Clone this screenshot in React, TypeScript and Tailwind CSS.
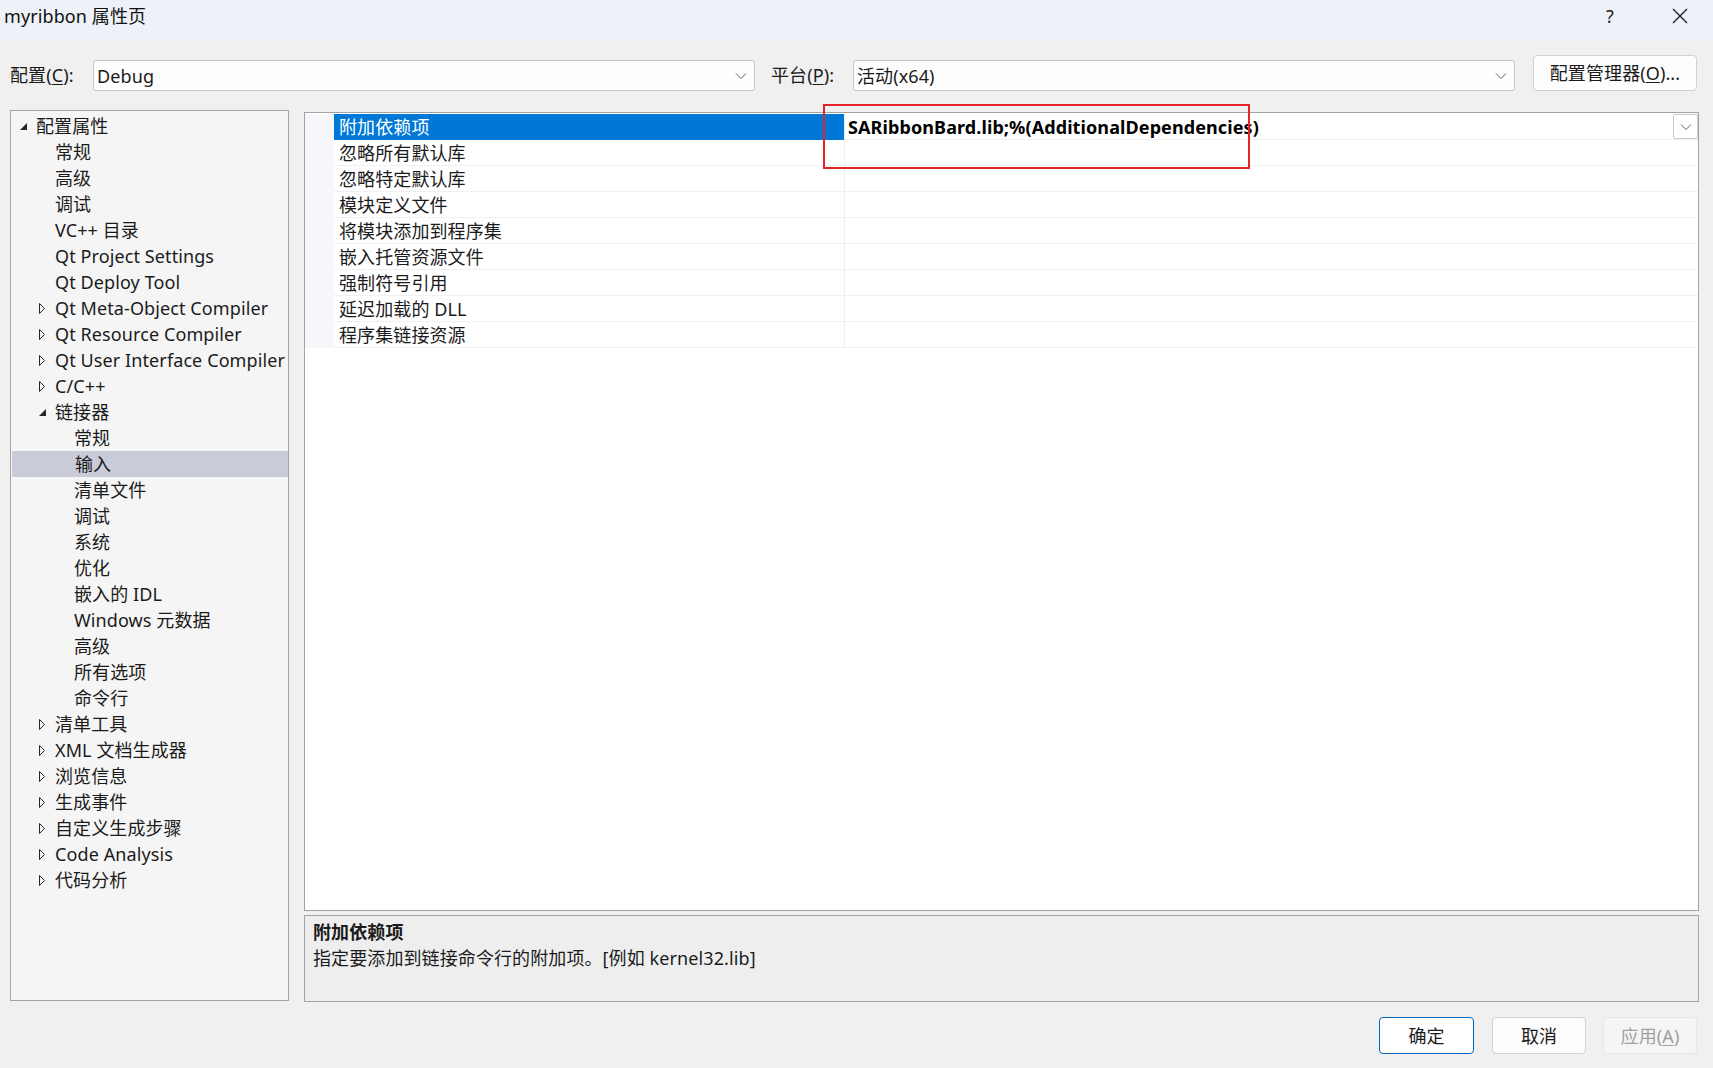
import React from 'react';

type TreeNode = {
  label: string;
  level: number;
  expander?: 'open' | 'closed';
  selected?: boolean;
};

const treeItems: TreeNode[] = [
  { label: '配置属性', level: 0, expander: 'open' },
  { label: '常规', level: 1 },
  { label: '高级', level: 1 },
  { label: '调试', level: 1 },
  { label: 'VC++ 目录', level: 1 },
  { label: 'Qt Project Settings', level: 1 },
  { label: 'Qt Deploy Tool', level: 1 },
  { label: 'Qt Meta-Object Compiler', level: 1, expander: 'closed' },
  { label: 'Qt Resource Compiler', level: 1, expander: 'closed' },
  { label: 'Qt User Interface Compiler', level: 1, expander: 'closed' },
  { label: 'C/C++', level: 1, expander: 'closed' },
  { label: '链接器', level: 1, expander: 'open' },
  { label: '常规', level: 2 },
  { label: '输入', level: 2, selected: true },
  { label: '清单文件', level: 2 },
  { label: '调试', level: 2 },
  { label: '系统', level: 2 },
  { label: '优化', level: 2 },
  { label: '嵌入的 IDL', level: 2 },
  { label: 'Windows 元数据', level: 2 },
  { label: '高级', level: 2 },
  { label: '所有选项', level: 2 },
  { label: '命令行', level: 2 },
  { label: '清单工具', level: 1, expander: 'closed' },
  { label: 'XML 文档生成器', level: 1, expander: 'closed' },
  { label: '浏览信息', level: 1, expander: 'closed' },
  { label: '生成事件', level: 1, expander: 'closed' },
  { label: '自定义生成步骤', level: 1, expander: 'closed' },
  { label: 'Code Analysis', level: 1, expander: 'closed' },
  { label: '代码分析', level: 1, expander: 'closed' },
];

const properties = [
  '附加依赖项',
  '忽略所有默认库',
  '忽略特定默认库',
  '模块定义文件',
  '将模块添加到程序集',
  '嵌入托管资源文件',
  '强制符号引用',
  '延迟加载的 DLL',
  '程序集链接资源',
];

const indent = ['pl-[9px]', 'pl-[28px]', 'pl-[47px]'];

const Chevron = () => (
  <svg width="12" height="8" viewBox="0 0 12 8" fill="none">
    <polyline points="1,1.5 6,6.5 11,1.5" stroke="#606060" strokeWidth="1" />
  </svg>
);

const Expander: React.FC<{ kind?: 'open' | 'closed' }> = ({ kind }) => (
  <span className="w-[16px] h-[26px] flex items-center">
    {kind === 'open' && (
      <svg width="7" height="7" viewBox="0 0 7 7">
        <polygon points="7,0 7,7 0,7" fill="#262626" />
      </svg>
    )}
    {kind === 'closed' && (
      <svg width="6" height="11" viewBox="0 0 6 11">
        <polygon points="0.5,0.5 5.5,5.5 0.5,10.5" fill="none" stroke="#262626" strokeWidth="1" />
      </svg>
    )}
  </span>
);

const ComboBox: React.FC<{ value: string }> = ({ value }) => (
  <div className="w-[662px] h-[31px] mt-[5px] bg-[#fdfdfd] border border-[#c4c4c4] rounded-[3px] flex items-center justify-between pl-[3px] pr-[7px]">
    <span>{value}</span>
    <Chevron />
  </div>
);

export default function App() {
  return (
    <div className="w-[1713px] h-[1068px] bg-[#f0f0f0] text-[18px] leading-[26px] text-[#1b1b1b] font-['Noto_Sans','Noto_Sans_CJK_SC',sans-serif] tracking-[0.1px] flex flex-col overflow-hidden">
      {/* title bar */}
      <div className="h-[40px] bg-[#eef2f8] flex items-start justify-between pt-[3px] shrink-0">
        <span className="pl-[4px] text-[18px] text-[#111]">myribbon 属性页</span>
        <div className="flex items-center h-[26px] mr-[10px]">
          <span className="w-[24px] text-center text-[18px] text-[#222]">?</span>
          <span className="w-[46px] ml-[35px] flex justify-center">
            <svg width="16" height="16" viewBox="0 0 16 16">
              <line x1="1" y1="1" x2="15" y2="15" stroke="#1b1b1b" strokeWidth="1.2" />
              <line x1="15" y1="1" x2="1" y2="15" stroke="#1b1b1b" strokeWidth="1.2" />
            </svg>
          </span>
        </div>
      </div>

      {/* configuration row */}
      <div className="h-[36px] mt-[15px] flex items-start shrink-0">
        <span className="ml-[10px] w-[83px] h-[31px] mt-[5px] leading-[31px]">
          配置(<span className="underline underline-offset-2">C</span>):
        </span>
        <ComboBox value="Debug" />
        <span className="ml-[16px] w-[82px] h-[31px] mt-[5px] leading-[31px]">
          平台(<span className="underline underline-offset-2">P</span>):
        </span>
        <ComboBox value="活动(x64)" />
        <button className="ml-[18px] w-[164px] h-[36px] bg-[#fdfdfd] border border-[#d2d2d2] rounded-[4px] text-[18px]">
          配置管理器(<span className="underline underline-offset-2">O</span>)...
        </button>
      </div>

      {/* main area */}
      <div className="mt-[19px] flex h-[892px] shrink-0">
        <div className="ml-[10px] w-[279px] h-[891px] bg-[#f5f5f5] border border-[#a3a3a3] pt-[2px] overflow-hidden">
          {treeItems.map((item, i) => (
            <div
              key={i}
              className={`h-[26px] flex items-center whitespace-nowrap ${indent[item.level]} ${item.selected ? 'bg-[#c9ccd8] ml-[1px]' : ''}`}
            >
              <Expander kind={item.expander} />
              <span>{item.label}</span>
            </div>
          ))}
        </div>

        <div className="ml-[15px] w-[1395px] flex flex-col">
          <div className="mt-[2px] h-[799px] bg-white border border-[#a3a3a3] pt-[1px] relative">
            {properties.map((name, i) => (
              <div key={name} className="h-[26px] flex">
                <div className="w-[29px] bg-[#f5f7fb]" />
                <div
                  className={`w-[510px] pl-[5px] border-b ${i === 0 ? 'bg-[#0078d7] text-white border-[#0078d7]' : 'border-[#f0f0f0]'}`}
                >
                  {name}
                </div>
                <div className="flex-1 border-l border-b border-[#f0f0f0] flex justify-between">
                  {i === 0 && (
                    <>
                      <span className="pl-[3px] font-bold text-black">SARibbonBard.lib;%(AdditionalDependencies)</span>
                      <span className="w-[25px] h-[25px] bg-white border border-[#c8c8c8] rounded-[2px] flex items-center justify-center">
                        <Chevron />
                      </span>
                    </>
                  )}
                </div>
              </div>
            ))}
            {/* red annotation */}
            <div className="absolute left-[518px] top-[-9px] w-[427px] h-[65px] border-2 border-[#e5242a]" />
          </div>

          <div className="mt-[4px] h-[87px] bg-[#eeeeee] border border-[#a3a3a3] pl-[8px] pt-[3px]">
            <div className="font-bold">附加依赖项</div>
            <div>指定要添加到链接命令行的附加项。[例如 kernel32.lib]</div>
          </div>
        </div>
      </div>

      {/* buttons */}
      <div className="mt-[15px] flex justify-end pr-[16px] shrink-0">
        <button className="w-[95px] h-[37px] bg-white border border-[#0067c0] rounded-[4px] text-[18px]">确定</button>
        <button className="ml-[18px] w-[94px] h-[37px] bg-[#fdfdfd] border border-[#d2d2d2] rounded-[4px] text-[18px]">取消</button>
        <button className="ml-[17px] w-[94px] h-[37px] bg-[#f5f5f5] border border-[#e6e6e6] rounded-[4px] text-[18px] text-[#a0a0a0]">
          应用(<span className="underline underline-offset-2">A</span>)
        </button>
      </div>
    </div>
  );
}
